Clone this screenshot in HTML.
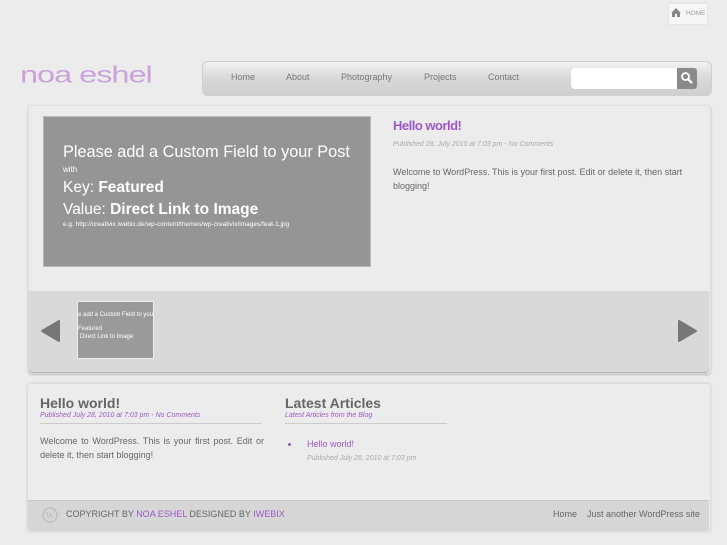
<!DOCTYPE html>
<html><head><style>
body{margin:0;width:727px;height:545px;background:#ececec;font-family:"Liberation Sans",sans-serif;position:relative;overflow:hidden}
.a{position:absolute}
.pur{color:#9b59c6}
</style></head><body>
<div class="a" style="left:668px;top:3px;width:38px;height:20px;background:#f7f7f7;border:1px solid #e4e4e4"></div>
<svg class="a" style="left:670px;top:7px" width="12" height="11"><path d="M1 6 L6 1 L11 6 L10 6 L10 10 L7 10 L7 7 L5 7 L5 10 L2 10 L2 6Z" fill="#888"/></svg>
<div class="a" style="left:686px;top:10px;font-size:6.5px;color:#999">HOME</div>
<div class="a" style="left:20px;top:57px;font-size:31px;color:#c89ad9;font-weight:normal;letter-spacing:-1px;transform:scale(1.05,0.75);transform-origin:left center;font-family:'Liberation Sans',sans-serif;opacity:0.9">noa eshel</div>
<div class="a" style="left:202px;top:61px;width:508px;height:33px;border:1px solid #d0d0d0;border-radius:6px;background:linear-gradient(#f2f2f2,#d8d8d8 50%,#cfcfcf)"></div>
<div class="a" style="top:72px;font-size:9px;color:#777;left:231px">Home</div>
<div class="a" style="top:72px;font-size:9px;color:#777;left:286px">About</div>
<div class="a" style="top:72px;font-size:9px;color:#777;left:341px">Photography</div>
<div class="a" style="top:72px;font-size:9px;color:#777;left:424px">Projects</div>
<div class="a" style="top:72px;font-size:9px;color:#777;left:488px">Contact</div>
<div class="a" style="left:571px;top:68px;width:106px;height:21px;background:#fff;border-radius:4px 0 0 4px"></div>
<div class="a" style="left:677px;top:68px;width:20px;height:21px;background:#8a8a8a;border-radius:0 3px 3px 0"></div>
<svg class="a" style="left:680px;top:71px" width="14" height="14"><circle cx="5.5" cy="5.5" r="3.5" stroke="#fff" stroke-width="1.8" fill="none"/><path d="M8 8 L12 12" stroke="#fff" stroke-width="2.4"/></svg>

<div class="a" style="left:28px;top:105px;width:681px;height:267px;background:#ececec;border:1px solid #e0e0e0;border-radius:4px;box-shadow:0 1px 2px #bbb"></div>
<div class="a" style="left:43px;top:116px;width:326px;height:149px;background:#959595;border:1px solid #b8b8b8;color:#fff">
<div class="a" style="left:19px;top:26px;font-size:16.3px;white-space:nowrap">Please add a Custom Field to your Post</div>
<div class="a" style="left:19px;top:48px;font-size:8px">with</div>
<div class="a" style="left:19px;top:62px;font-size:15.5px">Key: <b>Featured</b></div>
<div class="a" style="left:19px;top:84px;font-size:15.5px">Value: <b>Direct Link to Image</b></div>
<div class="a" style="left:19px;top:104px;font-size:6.5px;white-space:nowrap">e.g. http://creativix.iwebix.de/wp-content/themes/wp-creativix/images/feat-1.jpg</div>
</div>
<div class="a pur" style="left:393px;top:118px;font-size:13px;font-weight:bold;letter-spacing:-0.5px">Hello world!</div>
<div class="a" style="left:393px;top:141px;font-size:7px;color:#aaa;font-style:italic">Published 28. July 2010 at 7:03 pm - No Comments</div>
<div class="a" style="left:393px;top:165px;font-size:9px;color:#666;line-height:14px;width:300px">Welcome to WordPress. This is your first post. Edit or delete it, then start blogging!</div>
<div class="a" style="left:29px;top:291px;width:680px;height:81px;background:#d9d9d9;border-radius:0 0 4px 4px;box-shadow:0 1px 1px #aaa"></div>
<svg class="a" style="left:40px;top:319px" width="22" height="24"><path d="M19 2 L19 22 L2 12Z" fill="#777" stroke="#777" stroke-linejoin="round" stroke-width="2"/></svg>
<svg class="a" style="left:676px;top:319px" width="22" height="24"><path d="M3 2 L3 22 L20 12Z" fill="#777" stroke="#777" stroke-linejoin="round" stroke-width="2"/></svg>
<div class="a" style="left:77px;top:301px;width:75px;height:56px;background:#9a9a9a;border:1px solid #eee;overflow:hidden;color:#fff;font-size:6px">
<div class="a" style="left:0;top:10px;white-space:nowrap">e add a Custom Field to you</div>
<div class="a" style="left:0;top:24px">Featured</div>
<div class="a" style="left:2px;top:32px;white-space:nowrap">Direct Link to Image</div>
</div>

<div class="a" style="left:27px;top:383px;width:682px;height:147px;background:#ececec;border:1px solid #dcdcdc;border-radius:4px;box-shadow:0 0 2px #ccc"></div>
<div class="a" style="left:40px;top:395px;font-size:14px;font-weight:bold;color:#666">Hello world!</div>
<div class="a pur" style="left:40px;top:412px;font-size:7px;font-style:italic">Published July 28, 2010 at 7:03 pm - No Comments</div>
<div class="a" style="left:40px;top:423px;width:222px;height:1px;background:#ccc"></div>
<div class="a" style="left:40px;top:434px;font-size:9px;color:#666;line-height:14px;width:224px;text-align:justify">Welcome to WordPress. This is your first post. Edit or delete it, then start blogging!</div>
<div class="a" style="left:285px;top:395px;font-size:14px;font-weight:bold;color:#666">Latest Articles</div>
<div class="a pur" style="left:285px;top:412px;font-size:7px;font-style:italic">Latest Articles from the Blog</div>
<div class="a" style="left:285px;top:423px;width:162px;height:1px;background:#ccc"></div>
<div class="a" style="left:288px;top:443px;width:3px;height:3px;border-radius:50%;background:#8b5fa8"></div>
<div class="a pur" style="left:307px;top:439px;font-size:9px">Hello world!</div>
<div class="a" style="left:307px;top:455px;font-size:7px;color:#aaa;font-style:italic">Published July 28, 2010 at 7:03 pm</div>
<div class="a" style="left:28px;top:500px;width:681px;height:30px;background:#d6d6d6;border-top:1px solid #c8c8c8;border-radius:0 0 4px 4px"></div>
<svg class="a" style="left:42px;top:507px" width="16" height="16"><circle cx="8" cy="8" r="7" fill="none" stroke="#bbb" stroke-width="1.2"/><text x="8" y="11.5" font-size="9" text-anchor="middle" fill="#bbb" font-family="Liberation Serif">W</text></svg>
<div class="a" style="left:66px;top:509px;font-size:9px;color:#666;white-space:nowrap">COPYRIGHT BY <span class="pur">NOA ESHEL</span> DESIGNED BY <span class="pur">IWEBIX</span></div>
<div class="a" style="left:553px;top:509px;font-size:9px;color:#666;white-space:nowrap">Home &nbsp;&nbsp;&nbsp;Just another WordPress site</div>
</body></html>
